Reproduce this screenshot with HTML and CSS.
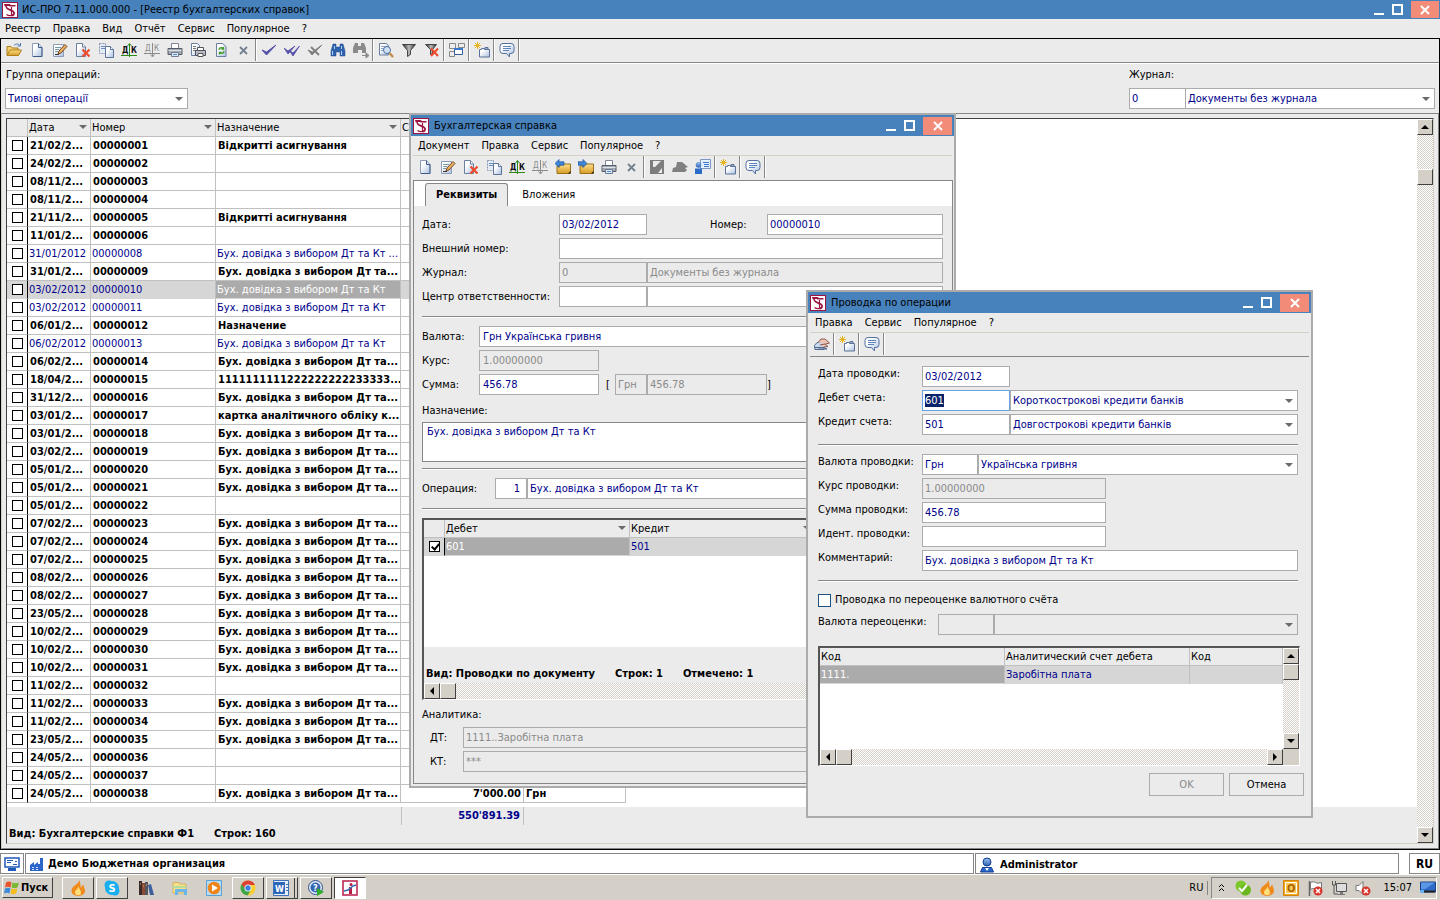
FILE: index.html
```html
<!DOCTYPE html>
<html lang="ru">
<head>
    <meta charset="UTF-8">
    <meta name="viewport" content="width=device-width, initial-scale=1.0">
    <title>ИС-ПРО 7.11.000.000 - [Реестр бухгалтерских справок]</title>
    <link rel="stylesheet" href="styles.css">
</head>
<body>
    <!-- Icons -->
    <svg class="sprite" width="0" height="0" aria-hidden="true">
        <defs>
            <linearGradient id="g-paper" x1="0" y1="0" x2="1" y2="1"><stop offset="0.3" stop-color="#fff"/><stop offset="1" stop-color="#a9bfe0"/></linearGradient>
            <linearGradient id="g-gold" x1="0" y1="0" x2="0" y2="1"><stop offset="0" stop-color="#fbe08a"/><stop offset="1" stop-color="#d79b24"/></linearGradient>
            <linearGradient id="g-blue" x1="0" y1="0" x2="0" y2="1"><stop offset="0" stop-color="#9cc3f0"/><stop offset="1" stop-color="#2b62b8"/></linearGradient>
            <linearGradient id="g-gray" x1="0" y1="0" x2="1" y2="0"><stop offset="0" stop-color="#222"/><stop offset="0.5" stop-color="#bbb"/><stop offset="1" stop-color="#222"/></linearGradient>
        </defs>
        <symbol id="i-logo" viewBox="0 0 16 16"><rect x="0.5" y="0.5" width="15" height="15" fill="#fff" stroke="#9b1540"/><path d="M2 2h5.500l1.500 1h4.500v1.500H8L6.500 4H5v1.500L2.500 4z" fill="#9b1540"/><path d="M4.500 5C4 8 11 7.500 12 10.500c.500 2-1 3-2.500 3" fill="none" stroke="#9b1540" stroke-width="1.800"/><path d="M9.500 5v9M4.500 12.500q2 1.500 5 1" fill="none" stroke="#9b1540" stroke-width="1.200"/></symbol>
        <symbol id="i-open" viewBox="0 0 16 16"><path d="M1 13V4.500h4l1.500 1.500H12v2" fill="#f2cf6b" stroke="#a87b1e"/><path d="M1 13.500L4 8h11.500l-3 5.500z" fill="url(#g-gold)" stroke="#b1801d"/><path d="M8 3.500c2-2 4-2 6 0M14.500 1v3h-3" fill="none" stroke="#4b78b0"/></symbol>
        <symbol id="i-new" viewBox="0 0 16 16"><path d="M3.500 1.500h6l3.500 4v9H3.500z" fill="url(#g-paper)" stroke="#8c9cb8"/><path d="M9.500 1.500v4H13M13 5.500v9H4" fill="none" stroke="#3f5a86"/></symbol>
        <symbol id="i-edit" viewBox="0 0 16 16"><path d="M1.500 2.500h10v12h-10z" fill="url(#g-paper)" stroke="#8c9cb8"/><path d="M3 5.500h6M3 7.500h4M3 9.500h3" stroke="#7a98a0"/><path d="M6 12l1-3 6-6.500 2 2-6 6.500z" fill="#e8b060" stroke="#7a4a28"/><path d="M3 12.500h4" stroke="#333"/></symbol>
        <symbol id="i-del" viewBox="0 0 16 16"><path d="M1.500 1.500h6l3 3.500v9.500h-9z" fill="url(#g-paper)" stroke="#6d7fa0"/><path d="M7.500 1.500v3.500h3" fill="#fff" stroke="#6d7fa0"/><path d="M7.500 7.500l7 7M14.500 7.500l-7 7" stroke="#f04a2a" stroke-width="2.200"/></symbol>
        <symbol id="i-copy" viewBox="0 0 16 16"><path d="M1.500 1.500h6v10h-6z" fill="#e6ecf5" stroke="#8b98b4" stroke-dasharray="2 1"/><path d="M3 4.500h4M3 6.500h4" stroke="#6d8fbd"/><path d="M7.500 4.500h5l3 3v8h-8z" fill="url(#g-paper)" stroke="#5d7298"/><path d="M12.500 4.500v3h3" fill="#fff" stroke="#5d7298"/></symbol>
        <symbol id="i-dk" viewBox="0 0 16 16"><text x="1" y="11" font-size="8" font-weight="bold" fill="#111">Д</text><text x="10" y="11" font-size="8" font-weight="bold" fill="#111">К</text><path d="M0 13.500h16" stroke="#2b8a16"/><path d="M8.500 15V2M6.500 4l2-2.500 2 2.500" fill="none" stroke="#2b8a16"/></symbol>
        <symbol id="i-dk-off" viewBox="0 0 16 16"><text x="1" y="9" font-size="8" fill="#8a8a8a">Д</text><text x="10" y="9" font-size="8" fill="#8a8a8a">К</text><path d="M0 11.500h16M8.500 1v13M6.500 12.500l2 2.500 2-2.500" fill="none" stroke="#8a8a8a"/></symbol>
        <symbol id="i-print" viewBox="0 0 16 16"><path d="M4.500 1.500h7v5h-7z" fill="#fff" stroke="#7f8796"/><path d="M1 6.500h14v6H1z" fill="#a5a9b2" stroke="#555c6b"/><path d="M1.500 8.500h13" stroke="#dfe2e8"/><path d="M4.500 10.500h7v4h-7z" fill="#dceaf8" stroke="#6f7a8f"/><path d="M6 12.500h4" stroke="#4a90d0"/></symbol>
        <symbol id="i-print2" viewBox="0 0 16 16"><path d="M1.500 1.500h6l2 2v10h-8z" fill="url(#g-paper)" stroke="#6d7fa0"/><path d="M3 4.500h3M3 6.500h3M3 8.500h3" stroke="#777"/><path d="M7.500 5.500h6v3h-6z" fill="#fff" stroke="#555"/><path d="M5.500 8.500h10v5h-10z" fill="#b9bcc4" stroke="#4d5260"/><path d="M8 11.500h5v3H8z" fill="#fff" stroke="#555"/></symbol>
        <symbol id="i-refresh" viewBox="0 0 16 16"><path d="M3.500 1.500h6l3.500 3v10H3.500z" fill="url(#g-paper)" stroke="#6d7fa0"/><path d="M6 8c0-2 2-3 4-1.500M10.500 5v2h-2M11 9c0 2-2 3-4 1.500M6.500 12.500v-2h2" fill="none" stroke="#3f9a22" stroke-width="1.300"/></symbol>
        <symbol id="i-x" viewBox="0 0 16 16"><path d="M4 5l7 7M11 5l-7 7" stroke="#74808f" stroke-width="1.800"/></symbol>
        <symbol id="i-check" viewBox="0 0 16 16"><path d="M1 8l4.500 5L15 3l-9.500 7z" fill="#5450a8" stroke="#5450a8"/></symbol>
        <symbol id="i-checks" viewBox="0 0 16 16"><path d="M0 6l4 6 7-8-7 5zM5 8l4 6 6.500-10L9 11z" fill="#5450a8" stroke="#5450a8" stroke-width="0.800"/></symbol>
        <symbol id="i-uncheck" viewBox="0 0 16 16"><path d="M1 8l4 5L15 3l-9.500 7z" fill="#808080" stroke="#808080"/><path d="M4 5l8 8" stroke="#808080" stroke-width="2"/></symbol>
        <symbol id="i-find" viewBox="0 0 16 16"><path d="M3 2h3v3h4V2h3l2 7v5h-5v-4H6v4H1V9z" fill="#2f62ad" stroke="#1d4484" stroke-width="0.500"/><path d="M2.500 9v4M4.500 4v3M11.500 4v3M11.500 9v4" stroke="#a9cdf3"/></symbol>
        <symbol id="i-findnext" viewBox="0 0 16 16"><path d="M2 1h3v3h3V1h3l2 5v5H9V8H5v3H0V6z" fill="#8a8a8a"/><path d="M9 13.500h5M13 11l3 2.500-3 2.500z" fill="#8a8a8a" stroke="#8a8a8a"/></symbol>
        <symbol id="i-preview" viewBox="0 0 16 16"><path d="M1.500 1.500h7l2 2.500v9h-9z" fill="url(#g-paper)" stroke="#6d7fa0"/><path d="M3 4.500h5M3 6.500h3M3 8.500h2" stroke="#8fa4c4"/><circle cx="9" cy="8" r="3.500" fill="#cfe2f7" stroke="#4d6fa0"/><path d="M11.500 11l3.500 4" stroke="#c08838" stroke-width="2"/></symbol>
        <symbol id="i-filter" viewBox="0 0 16 16"><path d="M1.500 2.500h13L9.500 8.500v4l-3 2v-6z" fill="url(#g-gray)" stroke="#444"/></symbol>
        <symbol id="i-nofilter" viewBox="0 0 16 16"><path d="M1.500 2.500h11L8.500 7.500v4l-2 1v-5z" fill="url(#g-gray)" stroke="#444"/><path d="M7 6.500l7 7.500M14 6.500L7 14" stroke="#f04a2a" stroke-width="2"/></symbol>
        <symbol id="i-windows" viewBox="0 0 16 16"><path d="M.5 1.500h6v5h-6zM9.500 1.500h6v4h-6zM.5 9.500h5v5h-5z" fill="#eee" stroke="#888"/><path d="M5.500 6.500h8v6h-8z" fill="#fff" stroke="#345f9f"/><path d="M5 7h9" stroke="#3b78d0" stroke-width="2"/></symbol>
        <symbol id="i-pin" viewBox="0 0 16 16"><path d="M3.500 0v7M0 3.500h7M1 1l5 5M6 1L1 6" stroke="#e3b41c"/><path d="M5.500 7.500h2v-1h3v1h5v7.500h-10z" fill="url(#g-paper)" stroke="#5d7298"/><path d="M11 5.500h3v2h-3z" fill="#a9b4c8" stroke="#5d7298"/></symbol>
        <symbol id="i-chat" viewBox="0 0 16 16"><path d="M4 1.500h8q3 0 3 3v4q0 3-3 3h-1.500v3.500l-3-3.500H4q-3 0-3-3v-4q0-3 3-3z" fill="url(#g-paper)" stroke="#53719f"/><path d="M4 4.500h8M4 6.500h8M4 8.500h6" stroke="#5c85bd"/></symbol>
        <symbol id="i-prev" viewBox="0 0 16 16"><path d="M2 7h3l1-2h9.500v9.500H2z" fill="url(#g-gold)" stroke="#9c7017"/><path d="M0 4.500l4-4v2.300h5v3.400H4v2.300z" fill="#3f86d8" stroke="#1c539b" stroke-width="0.700"/><path d="M13 14.500l2.500-2.500v2.500z" fill="#222"/></symbol>
        <symbol id="i-next" viewBox="0 0 16 16"><path d="M2 7h3l1-2h9.500v9.500H2z" fill="url(#g-gold)" stroke="#9c7017"/><path d="M9 4.500l-4-4v2.300H0v3.400h5v2.300z" fill="#3f86d8" stroke="#1c539b" stroke-width="0.700"/><path d="M13 14.500l2.500-2.500v2.500z" fill="#222"/></symbol>
        <symbol id="i-save" viewBox="0 0 16 16"><path d="M1 1h14v14H1z" fill="#7d7d7d"/><path d="M4 2h8L6 8H4zM9 14l4-5v5z" fill="#ebebeb"/></symbol>
        <symbol id="i-post" viewBox="0 0 16 16"><path d="M5 3h5l6 5-3 1 2 2-2 2H0l1-4 3-1z" fill="#808080"/></symbol>
        <symbol id="i-user" viewBox="0 0 16 16"><path d="M5.500 .5h10v9h-10z" fill="#e3efff" stroke="#7b97c4"/><path d="M8 3.500h6M9 5.500h5M9 7.500h5" stroke="#3f78c4"/><circle cx="3.500" cy="6" r="2.500" fill="url(#g-blue)" stroke="#2b62b8" stroke-width="0.500"/><path d="M0 15V9.500h7V15z" fill="#2b6cc8"/></symbol>
        <symbol id="i-books" viewBox="0 0 16 16"><path d="M.5 9.500L3 6.500h9l-2 3v4H1z" fill="#c8d8ee" stroke="#51668b"/><path d="M4 6.500l3-3.500h4l4.500 4-4 1M6 9l5-1 3 2.500-4 .5" fill="#f0c4b4" stroke="#8a5a50"/><path d="M1 11.500h9l3 1.500H4" fill="none" stroke="#51668b"/></symbol>
        <symbol id="i-pc" viewBox="0 0 16 16"><path d="M1 2h14v9H1z" fill="#fff" stroke="#2158b8" stroke-width="1.500"/><path d="M3 4.500h6M3 6.500h4M9 8.500h4M11 5.500h2" stroke="#2158b8"/><path d="M4 12h8v3H4z" fill="#2158b8"/></symbol>
        <symbol id="i-factory" viewBox="0 0 16 16"><path d="M1 15V9l4-3v3l4-3v2h2V2h3v13z" fill="#2b66c8"/><path d="M3 11.500h2M7 11.500h2M3 13.500h2M7 13.500h2" stroke="#cfe0fa"/></symbol>
        <symbol id="i-person" viewBox="0 0 16 16"><circle cx="8" cy="5" r="4" fill="url(#g-blue)" stroke="#123f94"/><path d="M1.500 15l2-4.500h9l2 4.500z" fill="#2b66c8" stroke="#123f94"/><path d="M6 11l2 3 2-3" fill="#fff"/></symbol>
        <symbol id="i-flag" viewBox="0 0 16 16"><path d="M2 2.500q3-2 5.500 0l-1 5q-3-1.500-5.500 0z" fill="#e8552a"/><path d="M8.500 2.500q3 1.500 6.500 0l-1.500 5q-3 1.500-6 0z" fill="#7cb82f"/><path d="M1 8.500q3-1.500 5.500 0l-1 5q-2.500-1.500-5.500 0z" fill="#3a8bd8"/><path d="M7.500 8.500q3 1.500 6 0l-1.500 5q-3 1.500-5.500 0z" fill="#f5bc1c"/></symbol>
        <symbol id="i-fire" viewBox="0 0 16 16"><path d="M9 0c1 4-8 6-7.500 11 .5 6.500 13 6.500 13.500 0 0-3-2-4-1-6-2 0-3 2-3 3-1-2 0-5-2-8z" fill="#f08a1c"/><path d="M8.500 6c0 3-4 4-3.500 7s6 3 6 0-2-4-2.500-7z" fill="#fde07a"/></symbol>
        <symbol id="i-skype" viewBox="0 0 16 16"><circle cx="5" cy="5" r="4.500" fill="#19aef0"/><circle cx="11" cy="11" r="4.500" fill="#19aef0"/><circle cx="8" cy="8" r="7" fill="#19aef0"/><text x="4.500" y="12" font-size="11" font-weight="bold" fill="#fff">S</text></symbol>
        <symbol id="i-lib" viewBox="0 0 16 16"><path d="M1 1h3v14H1z" fill="#3a2a28"/><path d="M4 3h3v12H4z" fill="#8c4a34"/><path d="M7 2h3v13H7z" fill="#57555c"/><path d="M10 5l3-1 3 11h-4z" fill="#3c5f9c"/><path d="M2 4h1M5 6h1M8 5h1" stroke="#d8b070"/></symbol>
        <symbol id="i-folder" viewBox="0 0 16 16"><path d="M1 2.500h6l1 1.500h6v9H1z" fill="#f7e08c" stroke="#cba63c" stroke-width="0.700"/><path d="M1 6h13v2H1z" fill="#b8dc9a"/><path d="M3 15V9h12v6h-3v-3H6v3z" fill="#6cb6ea"/></symbol>
        <symbol id="i-play" viewBox="0 0 16 16"><path d="M.5 .5h15v15H.5z" fill="#b8dcf4" stroke="#5aa0d4"/><circle cx="8" cy="8" r="6.300" fill="#f08418"/><path d="M6 4.500l6 3.500-6 3.500z" fill="#fff"/></symbol>
        <symbol id="i-chrome" viewBox="0 0 16 16"><circle cx="8" cy="8" r="7.500" fill="#f7cf2e"/><path d="M1.500 4.300A7.500 7.500 0 0 1 15 5H8L5 9.500z" fill="#de4034"/><path d="M1.500 4.300A7.500 7.500 0 0 0 7.500 15.500L11 10H6z" fill="#3da54a"/><circle cx="8" cy="8" r="3.500" fill="#fff"/><circle cx="8" cy="8" r="2.700" fill="#3f7fe0"/></symbol>
        <symbol id="i-word" viewBox="0 0 16 16"><path d="M.5 .5h15v15H.5z" fill="#e7f0fb" stroke="#3f6fb4"/><path d="M1 2h11v12H1z" fill="#2c66b8"/><path d="M13 4.500h2M13 7.500h2M13 10.500h2" stroke="#3f6fb4"/><text x="2" y="12" font-size="9" font-weight="bold" fill="#fff">W</text></symbol>
        <symbol id="i-help" viewBox="0 0 16 16"><circle cx="7.500" cy="7.500" r="7" fill="#e4eefa" stroke="#2f4f88"/><circle cx="7.500" cy="7.500" r="5" fill="#3366b0"/><text x="5" y="11" font-size="9" font-weight="bold" fill="#fff">?</text><path d="M9 8l7 4-7 4z" fill="#2fae28"/></symbol>
        <symbol id="i-ispro" viewBox="0 0 16 16"><path d="M1 1h14v14H1z" fill="#fff" stroke="#b81d48" stroke-width="1.500"/><path d="M7 7h3v7H7z" fill="#b81d48"/><circle cx="9" cy="4.500" r="1.500" fill="#b81d48"/><path d="M2 11l4-1 5-4 3-1" fill="none" stroke="#3a6eb8" stroke-width="1.500"/></symbol>
        <symbol id="i-ok" viewBox="0 0 16 16"><circle cx="6" cy="6" r="5.500" fill="#7cc82a"/><circle cx="10.500" cy="10" r="5.500" fill="#6ab81e"/><path d="M4 8l3 3 5-6" fill="none" stroke="#fff" stroke-width="2"/></symbol>
        <symbol id="i-outlook" viewBox="0 0 16 16"><path d="M.5 .5h15v15H.5z" fill="#f3a51c" stroke="#d0860e"/><path d="M2.500 2.500h11v11h-11z" fill="#f8c95a" stroke="#fff"/><text x="4" y="12" font-size="11" font-weight="bold" fill="#a86200">O</text></symbol>
        <symbol id="i-action" viewBox="0 0 16 16"><path d="M2.500 1v15" stroke="#666" stroke-width="1.500"/><path d="M3.500 2.500q3-1.500 5 0t6 0v7q-4 1-6-.5t-5 .5z" fill="#fff" stroke="#777"/><circle cx="11" cy="11" r="4.500" fill="#d8342a"/><path d="M9 9l4 4M13 9l-4 4" stroke="#fff" stroke-width="1.500"/></symbol>
        <symbol id="i-net" viewBox="0 0 16 16"><path d="M5.500 3.500h10v8h-10z" fill="#ddd" stroke="#555"/><path d="M9 12h3v2h2v1H7v-1h2z" fill="#777"/><path d="M1.500 1v4h3V1M3 5v9h4" fill="none" stroke="#555"/></symbol>
        <symbol id="i-mute" viewBox="0 0 16 16"><path d="M1 5.500h3l4-4v13l-4-4H1z" fill="#fff" stroke="#777"/><circle cx="11" cy="11" r="4.500" fill="#d8342a"/><path d="M9 9l4 4M13 9l-4 4" stroke="#fff" stroke-width="1.500"/></symbol>
        <symbol id="i-desk" viewBox="0 0 16 16"><path d="M.5 2h15v10H.5z" fill="#2f6cc8" stroke="#1b3f80"/><path d="M1 2.500h14L5 9H1z" fill="#5a97e4"/><path d="M1 11.500h14" stroke="#222" stroke-width="2"/><path d="M0 10h4v3H0z" fill="#69b0f0"/></symbol>
    </svg>

    <header class="titlebar">
        <svg class="icon"><use href="#i-logo"/></svg>
        <h1 class="caption">ИС-ПРО 7.11.000.000 - [Реестр бухгалтерских справок]</h1>
        <button class="win-btn min" aria-label="Свернуть"></button>
        <button class="win-btn max" aria-label="Развернуть"></button>
        <button class="win-btn close" aria-label="Закрыть"><svg viewBox="0 0 10 10"><path d="M1 1l8 8M9 1L1 9"/></svg></button>
    </header>
    <nav class="menu">
        <button>Реестр</button><button>Правка</button><button>Вид</button><button>Отчёт</button><button>Сервис</button><button>Популярное</button><button>?</button>
    </nav>

    <main class="workspace">
        <div class="toolbar" data-icons="open new edit del copy dk dk-off print print2 refresh x | check checks uncheck find findnext | preview filter nofilter | windows | pin | chat |"></div>

        <div class="filters">
            <div class="filter">
                <label for="group">Группа операций:</label>
                <span class="combo w183"><select id="group"><option>Типові операції</option></select></span>
            </div>
            <div class="filter filter-right">
                <label for="journal">Журнал:</label>
                <div class="pair">
                    <input class="field w57" id="journal" value="0">
                    <span class="combo grow"><select aria-label="Название журнала"><option>Документы без журнала</option></select></span>
                </div>
            </div>
        </div>

        <div class="registry">
            <div class="sheet">
                <div class="sheet-main">
                    <table class="grid reg-table">
                        <colgroup><col class="c-check"><col class="c-date"><col class="c-num"><col class="c-name"><col class="c-sum"><col class="c-cur"></colgroup>
                        <thead>
                            <tr><th></th><th class="sort">Дата</th><th class="sort">Номер</th><th class="sort">Назначение</th><th>Сумма</th><th>Валюта</th></tr>
                        </thead>
                        <tbody id="rows"></tbody>
                    </table>
                    <div class="sheet-foot">
                        <div class="total">550'891.39</div>
                        <div class="summary"><span>Вид: Бухгалтерские справки Ф1</span><span>Строк: 160</span></div>
                    </div>
                </div>
                <div class="scroll-v"><button class="sb up" aria-label="Вверх"></button><span class="thumb far"></span><button class="sb down" aria-label="Вниз"></button></div>
            </div>
        </div>
    </main>

    <section class="window win-doc" aria-label="Бухгалтерская справка">
        <div class="titlebar">
            <svg class="icon"><use href="#i-logo"/></svg>
            <h2 class="caption">Бухгалтерская справка</h2>
            <button class="win-btn min" aria-label="Свернуть"></button>
            <button class="win-btn max" aria-label="Развернуть"></button>
            <button class="win-btn close" aria-label="Закрыть"><svg viewBox="0 0 10 10"><path d="M1 1l8 8M9 1L1 9"/></svg></button>
        </div>
        <nav class="menu">
            <button>Документ</button><button>Правка</button><button>Сервис</button><button>Популярное</button><button>?</button>
        </nav>
        <div class="toolbar" data-icons="new edit del copy dk dk-off prev next print x | save post user | pin | chat |"></div>
        <div class="frame">
            <div class="tabs">
                <button class="tab active">Реквизиты</button>
                <button class="tab">Вложения</button>
            </div>
            <form class="form doc-form">
                <div class="row">
                    <label class="l-wide" for="d-date">Дата:</label><input class="field w88" id="d-date" value="03/02/2012">
                    <label class="l-num" for="d-num">Номер:</label><input class="field grow" id="d-num" value="00000010">
                </div>
                <div class="row"><label class="l-wide" for="d-ext">Внешний номер:</label><input class="field grow" id="d-ext"></div>
                <div class="row"><label class="l-wide" for="d-jr">Журнал:</label><input class="field w88" id="d-jr" value="0" disabled><input class="field grow" value="Документы без журнала" aria-label="Название журнала" disabled></div>
                <div class="row"><label class="l-wide" for="d-resp">Центр ответственности:</label><input class="field w88" id="d-resp"><input class="field grow" aria-label="Название центра"></div>
                <hr>
                <div class="row"><label class="l-short" for="d-cur">Валюта:</label><input class="field pad grow" id="d-cur" value="Грн Українська гривня"></div>
                <div class="row"><label class="l-short" for="d-rate">Курс:</label><input class="field pad w120" id="d-rate" value="1.00000000" disabled></div>
                <div class="row">
                    <label class="l-short" for="d-sum">Сумма:</label><input class="field pad w120" id="d-sum" value="456.78">
                    <span class="bracket">[</span><input class="field w32" value="Грн" aria-label="Валюта суммы" disabled><input class="field w120" value="456.78" aria-label="Сумма в валюте" disabled><span>]</span>
                </div>
                <label class="l-block" for="d-text">Назначение:</label>
                <textarea id="d-text">Бух. довідка з вибором Дт та Кт</textarea>
                <hr>
                <div class="row"><label class="l-oper" for="d-op">Операция:</label><input class="field num w32" id="d-op" value="1"><input class="field grow" value="Бух. довідка з вибором Дт та Кт" aria-label="Название операции"></div>
                <hr>
                <div class="list doc-list">
                    <div class="list-body">
                        <table class="grid">
                            <colgroup><col class="c-check"><col class="c-acc"><col class="c-acc"><col></colgroup>
                            <thead><tr><th></th><th class="sort">Дебет</th><th class="sort">Кредит</th><th></th></tr></thead>
                            <tbody><tr class="sel"><td class="chk"><input type="checkbox" class="tick" aria-label="601" checked></td><td class="cur">601</td><td>501</td><td></td></tr></tbody>
                        </table>
                    </div>
                    <div class="list-foot"><span>Вид: Проводки по документу</span><span>Строк: 1</span><span>Отмечено: 1</span></div>
                    <div class="scroll-h"><button type="button" class="sb left" aria-label="Влево"></button><span class="thumb"></span><button type="button" class="sb right" aria-label="Вправо"></button></div>
                </div>
                <div class="l-an">Аналитика:</div>
                <div class="row"><label class="l-dt" for="d-dt">ДТ:</label><input class="field grow" id="d-dt" value="1111..Заробітна плата" disabled></div>
                <div class="row"><label class="l-dt" for="d-kt">КТ:</label><input class="field grow" id="d-kt" value="***" disabled></div>
            </form>
        </div>
    </section>

    <section class="window win-post" aria-label="Проводка по операции">
        <div class="titlebar">
            <svg class="icon"><use href="#i-logo"/></svg>
            <h2 class="caption">Проводка по операции</h2>
            <button class="win-btn min" aria-label="Свернуть"></button>
            <button class="win-btn max" aria-label="Развернуть"></button>
            <button class="win-btn close" aria-label="Закрыть"><svg viewBox="0 0 10 10"><path d="M1 1l8 8M9 1L1 9"/></svg></button>
        </div>
        <nav class="menu">
            <button>Правка</button><button>Сервис</button><button>Популярное</button><button>?</button>
        </nav>
        <div class="toolbar" data-icons="books | pin | chat |"></div>
        <form class="form post-form">
            <div class="row"><label for="p-date">Дата проводки:</label><input class="field w88" id="p-date" value="03/02/2012"></div>
            <div class="row"><label for="p-debit">Дебет счета:</label><input class="field w88" id="p-debit" value="601"><span class="combo grow"><select aria-label="Счет дебета"><option>Короткострокові кредити банків</option></select></span></div>
            <div class="row"><label for="p-credit">Кредит счета:</label><input class="field w88" id="p-credit" value="501"><span class="combo grow"><select aria-label="Счет кредита"><option>Довгострокові кредити банків</option></select></span></div>
            <hr>
            <div class="row"><label for="p-cur">Валюта проводки:</label><input class="field w56" id="p-cur" value="Грн"><span class="combo grow"><select aria-label="Название валюты"><option>Українська гривня</option></select></span></div>
            <div class="row"><label for="p-rate">Курс проводки:</label><input class="field w184" id="p-rate" value="1.00000000" disabled></div>
            <div class="row"><label for="p-sum">Сумма проводки:</label><input class="field w184" id="p-sum" value="456.78"></div>
            <div class="row"><label for="p-id">Идент. проводки:</label><input class="field w184" id="p-id"></div>
            <div class="row"><label for="p-com">Комментарий:</label><input class="field grow" id="p-com" value="Бух. довідка з вибором Дт та Кт"></div>
            <hr>
            <div class="check-row"><input type="checkbox" class="tick big" id="p-rev"><label for="p-rev">Проводка по переоценке валютного счёта</label></div>
            <div class="row"><label class="l-rev" for="p-revcur">Валюта переоценки:</label><input class="field w56" id="p-revcur" disabled><span class="combo grow"><select aria-label="Название валюты переоценки" disabled><option></option></select></span></div>
            <div class="list post-list">
                <div class="sheet">
                    <div class="list-body">
                        <table class="grid">
                            <colgroup><col class="c-acc"><col class="c-acc"><col></colgroup>
                            <thead><tr><th>Код</th><th>Аналитический счет дебета</th><th>Код</th></tr></thead>
                            <tbody><tr class="sel"><td class="cur">1111.</td><td>Заробітна плата</td><td></td></tr></tbody>
                        </table>
                    </div>
                    <div class="scroll-v"><button type="button" class="sb up" aria-label="Вверх"></button><span class="thumb"></span><button type="button" class="sb down" aria-label="Вниз"></button></div>
                </div>
                <div class="scroll-h corner"><button type="button" class="sb left" aria-label="Влево"></button><span class="thumb"></span><button type="button" class="sb right" aria-label="Вправо"></button></div>
            </div>
            <div class="actions"><button type="button" disabled>OK</button><button type="button">Отмена</button></div>
        </form>
    </section>

    <div class="statusbar">
        <div class="cell"><svg class="icon"><use href="#i-pc"/></svg></div>
        <div class="cell"><svg class="icon"><use href="#i-factory"/></svg>Демо Бюджетная организация</div>
        <div class="cell user"><svg class="icon"><use href="#i-person"/></svg>Administrator</div>
        <div class="cell lang">RU</div>
    </div>

    <footer class="taskbar">
        <button class="start"><svg class="icon"><use href="#i-flag"/></svg>Пуск</button>
        <button class="task" aria-label="Nero"><svg class="icon"><use href="#i-fire"/></svg></button>
        <button class="task" aria-label="Skype"><svg class="icon"><use href="#i-skype"/></svg></button>
        <button class="task flat" aria-label="Библиотека"><svg class="icon"><use href="#i-lib"/></svg></button>
        <button class="task flat" aria-label="Проводник"><svg class="icon"><use href="#i-folder"/></svg></button>
        <button class="task flat" aria-label="Проигрыватель"><svg class="icon"><use href="#i-play"/></svg></button>
        <button class="task" aria-label="Chrome"><svg class="icon"><use href="#i-chrome"/></svg></button>
        <button class="task stack" aria-label="Word"><svg class="icon"><use href="#i-word"/></svg></button>
        <button class="task" aria-label="Справка"><svg class="icon"><use href="#i-help"/></svg></button>
        <button class="task pressed" aria-label="ИС-ПРО"><svg class="icon"><use href="#i-ispro"/></svg></button>
        <span class="kbd">RU</span>
        <div class="tray">
            <svg class="chevrons" viewBox="0 0 7 9"><path d="M1 4l2.500-2.500L6 4M1 8l2.500-2.500L6 8"/></svg>
            <svg class="icon"><use href="#i-ok"/></svg>
            <svg class="icon"><use href="#i-fire"/></svg>
            <svg class="icon"><use href="#i-outlook"/></svg>
            <svg class="icon"><use href="#i-action"/></svg>
            <svg class="icon"><use href="#i-net"/></svg>
            <svg class="icon"><use href="#i-mute"/></svg>
            <time>15:07</time>
            <svg class="icon"><use href="#i-desk"/></svg>
        </div>
    </footer>

    <script src="script.js"></script>
</body>
</html>
```

FILE: styles.css
```css
* {
    box-sizing: border-box;
}
body {
    margin: 0;
    min-height: 100vh;
    display: flex;
    flex-direction: column;
    position: relative;
    background-color: #ebebeb;
    color: #000;
    font-family: "DejaVu Sans Condensed", "DejaVu Sans", sans-serif;
    font-size: 11px;
    line-height: 14px;
}
button, input, select, textarea {
    font: inherit;
    color: inherit;
    margin: 0;
    padding: 0;
    border: none;
    border-radius: 0;
    background: none;
    outline: none;
    appearance: none;
}
.sprite {
    position: absolute;
}
.icon {
    width: 16px;
    height: 16px;
    flex: none;
}
.grow {
    flex: 1;
    min-width: 0;
}

/* Title bars */
.titlebar {
    display: flex;
    align-items: center;
    height: 19px;
    padding-left: 2px;
    background-color: #4882bc;
}
.caption {
    flex: 1;
    margin: 0 0 0 4px;
    font-size: 11px;
    font-weight: normal;
    white-space: nowrap;
}
.win-btn.min {
    width: 10px;
    height: 2px;
    margin: 8px 8px 0 0;
    background-color: #fff;
}
.win-btn.max {
    width: 11px;
    height: 11px;
    margin-right: 8px;
    border: 2px solid #fff;
}
.win-btn.close {
    width: 28px;
    height: 17px;
    margin-right: 1px;
    background-color: #f28b78;
}
.close svg {
    display: block;
    width: 10px;
    height: 10px;
    margin: auto;
    fill: none;
    stroke: #fff;
    stroke-width: 2;
}

/* Menu and toolbar */
.menu {
    display: flex;
    gap: 12px;
    height: 19px;
    align-items: center;
    padding-left: 5px;
}
.toolbar {
    display: flex;
    align-items: flex-start;
    height: 25px;
    padding-left: 1px;
    border-bottom: 1px solid #868686;
}
.workspace .toolbar {
    height: 24px;
}
.tool {
    width: 23px;
    height: 22px;
    display: flex;
    align-items: center;
    justify-content: center;
}
.sep {
    width: 2px;
    height: 22px;
    background-color: #868686;
    border-right: 1px solid #fff;
}

/* Fields */
.field, .combo select {
    height: 21px;
    border: 1px solid #ababab;
    padding: 0 2px;
    background-color: #fff;
    color: #00008b;
}
.combo {
    display: flex;
    position: relative;
}
.combo select {
    flex: 1;
    width: 100%;
}
.combo::after {
    content: "";
    position: absolute;
    right: 5px;
    top: 9px;
    border: 4px solid transparent;
    border-top-color: #6a6a6a;
    border-bottom: none;
}
.field:disabled, .combo select:disabled {
    background-color: #ebebeb;
    color: #8a8a8a;
    opacity: 1;
}
.field.pad {
    padding-left: 3px;
}
.field.num {
    text-align: right;
    padding-right: 6px;
}
.field:focus {
    border-color: #66a3e0;
}
.field::selection {
    background-color: #0a246a;
    color: #fff;
}
.w32 { width: 32px; }
.w56 { width: 56px; }
.w57 { width: 57px; }
.w88 { width: 88px; }
.w120 { width: 120px; }
.w183 { width: 183px; }
.w184 { width: 184px; }

/* Main window */
.workspace {
    flex: 1;
    display: flex;
    flex-direction: column;
    border: 1px solid #000;
}
.filters {
    display: flex;
    justify-content: space-between;
    padding: 4px;
    border-top: 1px solid #fff;
}
.filter label {
    display: block;
    padding-left: 1px;
    margin-bottom: 6px;
}
.filter-right {
    width: 306px;
}
.filter-right label {
    padding-left: 0;
}
.pair {
    display: flex;
}
.pair .combo {
    margin-left: -1px;
}
.registry {
    flex: 1;
    display: flex;
    border: 1px solid #868686;
    border-left-color: #d4d0c8;
    padding: 4px;
}
.sheet {
    flex: 1;
    display: flex;
    min-height: 0;
}
.registry .sheet {
    border: 1px solid #404040;
    border-right-color: #d4d0c8;
    border-bottom-color: #d4d0c8;
}
.sheet-main {
    flex: 1;
    display: flex;
    flex-direction: column;
    justify-content: space-between;
    background-color: #fff;
}
.grid {
    width: 100%;
    table-layout: fixed;
    border-collapse: separate;
    border-spacing: 0;
}
.reg-table {
    width: 619px;
}
.c-check { width: 21px; }
.c-date { width: 63px; }
.c-num { width: 125px; }
.c-name { width: 185px; }
.c-sum { width: 123px; }
.c-cur { width: 102px; }
.c-acc { width: 185px; }
.grid th, .grid td {
    height: 18px;
    padding: 0 2px;
    border-right: 1px solid #c0c0c0;
    border-bottom: 1px solid #c0c0c0;
    text-align: left;
    white-space: nowrap;
    overflow: hidden;
}
.grid th {
    position: relative;
    padding-left: 1px;
    background-color: #ebebeb;
    font-weight: normal;
}
.sort::after {
    content: "";
    position: absolute;
    right: 3px;
    top: 6px;
    border: 4px solid transparent;
    border-top-color: #6a6a6a;
    border-bottom: none;
}
.grid td {
    font-weight: bold;
}
.grid td.chk {
    padding: 0 0 0 5px;
    border-right-color: #000;
}
.grid td.money {
    text-align: right;
}
.grid .plain td, .grid .sel td {
    padding-left: 1px;
    font-weight: normal;
    color: #00008b;
}
.grid .sel td {
    background-color: #d6d6d6;
    border-bottom-color: #d6d6d6;
}
.grid .plain td.chk, .grid .sel td.chk {
    padding-left: 5px;
}
.grid .sel td.cur {
    background-color: #ababab;
    color: #fff;
}
.tick {
    display: block;
    width: 11px;
    height: 11px;
    border: 1px solid #000;
    background-color: #fff;
    position: relative;
}
.tick:checked::after {
    content: "";
    position: absolute;
    left: 3px;
    top: 0;
    width: 3px;
    height: 6px;
    border: solid #000;
    border-width: 0 2px 2px 0;
    transform: rotate(40deg);
}
.tick.big {
    width: 13px;
    height: 13px;
    border-color: #1c5180;
}
.sheet-foot {
    height: 36px;
    background-color: #ebebeb;
    font-weight: bold;
}
.total {
    width: 123px;
    height: 18px;
    margin-left: 394px;
    padding: 2px 3px;
    border: solid #c0c0c0;
    border-width: 0 1px;
    text-align: right;
    color: #00008b;
}
.summary {
    display: flex;
    gap: 20px;
    padding: 2px;
}

/* Scrollbars */
.scroll-v, .scroll-h {
    display: flex;
    background: repeating-conic-gradient(#fff 0 25%, #d4d0c8 0 50%) 0 0 / 2px 2px;
}
.scroll-v {
    width: 16px;
    flex-direction: column;
}
.scroll-h {
    height: 16px;
}
.sb, .thumb {
    width: 16px;
    height: 16px;
    flex: none;
    background-color: #d4d0c8;
    border: 1px solid;
    border-color: #fff #404040 #404040 #fff;
}
.sb::after {
    content: "";
    display: block;
    width: 0;
    margin: auto;
    border: 4px solid transparent;
}
.up::after {
    border-top: none;
    border-bottom-color: #000;
}
.down::after {
    border-bottom: none;
    border-top-color: #000;
}
.left::after {
    border-left: none;
    border-right-color: #000;
}
.right::after {
    border-right: none;
    border-left-color: #000;
}
.thumb.far {
    margin-top: 34px;
}
.down {
    margin-top: auto;
}
.right {
    margin-left: auto;
}
.corner {
    border-right: 16px solid #d4d0c8;
}

/* Child windows */
.window {
    position: absolute;
    border: 2px solid #ababab;
    background-color: #ebebeb;
}
.window .titlebar {
    height: 21px;
}
.window .caption {
    margin-left: 5px;
}
.window .close {
    width: 29px;
    height: 18px;
    margin-right: 2px;
}
.window .menu {
    padding-left: 7px;
}
.win-doc {
    left: 409px;
    top: 113px;
    width: 547px;
}
.win-post {
    left: 806px;
    top: 290px;
    width: 507px;
}
.window .toolbar {
    margin: 0 2px;
    padding-left: 0;
    border-top: 1px solid #d4d0c8;
}
.win-doc .toolbar {
    border-bottom: none;
}
.frame {
    margin: 0 1px 2px 2px;
    border: 1px solid #868686;
}
.tabs {
    display: flex;
    height: 25px;
    padding: 2px 0 0 11px;
    background-color: #fff;
}
.tab {
    padding: 0 14px;
}
.tab.active {
    padding: 0 10px;
    font-weight: bold;
    background-color: #ebebeb;
    border: solid #868686;
    border-width: 1px 1px 0;
    border-radius: 3px 3px 0 0;
}
.row {
    display: flex;
    align-items: center;
    margin-bottom: 3px;
}
.form hr {
    height: 2px;
    margin: 9px 0 8px;
    border: none;
    border-top: 1px solid #868686;
    background-color: #fff;
}
.form textarea + hr {
    margin-top: 6px;
}
.doc-form {
    padding: 8px 9px 8px 8px;
}
.l-wide { width: 137px; }
.l-num { width: 120px; padding-left: 63px; }
.l-short { width: 57px; }
.l-oper { width: 73px; }
.l-dt { width: 41px; padding-left: 8px; }
.bracket {
    width: 16px;
    padding-left: 7px;
}
.l-block {
    display: block;
    margin: 9px 0 4px;
}
.doc-form textarea {
    display: block;
    width: 100%;
    height: 40px;
    padding: 2px 4px;
    border: 1px solid #868686;
    background-color: #fff;
    color: #00008b;
    resize: none;
}
.list {
    border: 2px solid #555;
    border-right: 1px solid #fff;
    border-bottom: 1px solid #fff;
}
.list-body {
    flex: 1;
    min-width: 0;
    background-color: #fff;
}
.doc-list .list-body {
    min-height: 127px;
}
.post-list .list-body {
    min-height: 101px;
}
.list-foot {
    display: flex;
    gap: 20px;
    padding: 20px 2px 2px;
    font-weight: bold;
}
.l-an {
    margin: 8px 0 5px;
}
.post-form {
    padding: 9px 13px 20px 10px;
}
.post-form .row > label {
    width: 104px;
    padding-top: 1px;
    align-self: flex-start;
}
.post-form .row > .l-rev {
    width: 120px;
}
.check-row {
    display: flex;
    align-items: center;
    gap: 4px;
    margin: 11px 0 7px;
}
.post-list {
    margin: 11px -2px 0 0;
}
.actions {
    display: flex;
    justify-content: flex-end;
    gap: 5px;
    margin: 7px -6px 0 0;
}
.actions button {
    width: 75px;
    height: 23px;
    border: 1px solid #ababab;
}
.actions button:disabled {
    color: #8a8a8a;
}

/* Status bar and taskbar */
.statusbar {
    display: grid;
    grid-template-columns: 24px 949fr 432fr 32px;
    gap: 1px;
    height: 24px;
    padding: 3px 0 1px;
    background-color: #fff;
    font-weight: bold;
}
.cell {
    display: flex;
    align-items: center;
    gap: 3px;
    padding-left: 3px;
    border: 1px solid #868686;
}
.cell.user {
    margin-right: 8px;
    padding-top: 3px;
    gap: 5px;
}
.cell.lang {
    margin-left: 1px;
    padding-left: 6px;
    font-size: 12px;
}
.taskbar {
    display: flex;
    align-items: center;
    gap: 2px;
    height: 26px;
    padding: 0 3px 0 2px;
    background-color: #d4d0c8;
    border-top: 1px solid #fff;
}
.start {
    display: flex;
    align-items: center;
    gap: 1px;
    width: 51px;
    height: 21px;
    margin-right: 7px;
    padding-left: 1px;
    font-weight: bold;
    border: 1px solid;
    border-color: #fff #404040 #404040 #fff;
}
.task {
    display: flex;
    align-items: center;
    justify-content: center;
    width: 32px;
    height: 22px;
    border: 1px solid;
    border-color: #fff #404040 #404040 #fff;
}
.task.flat {
    border-color: transparent;
}
.task.stack {
    padding-right: 3px;
    box-shadow: inset -2px 0 #d4d0c8, inset -3px 0 #404040;
}
.task.pressed {
    background-color: #fff;
    border-color: #404040 #fff #fff #404040;
}
.kbd {
    margin-left: auto;
    padding-right: 4px;
    border-right: 1px solid #868686;
}
.tray {
    display: flex;
    align-items: center;
    gap: 8px;
    height: 22px;
    margin-left: 1px;
    padding-left: 6px;
    border: 1px solid;
    border-color: #868686 #fff #fff #868686;
}
.tray time {
    margin-left: 4px;
}
.chevrons {
    width: 7px;
    height: 9px;
    margin-right: 2px;
    fill: none;
    stroke: #000;
}
```

FILE: script.js
```js
const named = 'Бух. довідка з вибором Дт та...';

// date, number, text, row kind
const rows = [
    ['21/02/2...', '00000001', 'Відкритті асигнування'],
    ['24/02/2...', '00000002', ''],
    ['08/11/2...', '00000003', ''],
    ['08/11/2...', '00000004', ''],
    ['21/11/2...', '00000005', 'Відкритті асигнування'],
    ['11/01/2...', '00000006', ''],
    ['31/01/2012', '00000008', 'Бух. довідка з вибором Дт та Кт ...', 'plain'],
    ['31/01/2...', '00000009', named],
    ['03/02/2012', '00000010', 'Бух. довідка з вибором Дт та Кт', 'sel'],
    ['03/02/2012', '00000011', 'Бух. довідка з вибором Дт та Кт', 'plain'],
    ['06/01/2...', '00000012', 'Назначение'],
    ['06/02/2012', '00000013', 'Бух. довідка з вибором Дт та Кт', 'plain'],
    ['06/02/2...', '00000014', named],
    ['18/04/2...', '00000015', '1111111111222222222233333...'],
    ['31/12/2...', '00000016', named],
    ['03/01/2...', '00000017', 'картка аналітичного обліку к...'],
    ['03/01/2...', '00000018', named],
    ['03/02/2...', '00000019', named],
    ['05/01/2...', '00000020', named],
    ['05/01/2...', '00000021', named],
    ['05/01/2...', '00000022', ''],
    ['07/02/2...', '00000023', named],
    ['07/02/2...', '00000024', named],
    ['07/02/2...', '00000025', named],
    ['08/02/2...', '00000026', named],
    ['08/02/2...', '00000027', named],
    ['23/05/2...', '00000028', named],
    ['10/02/2...', '00000029', named],
    ['10/02/2...', '00000030', named],
    ['10/02/2...', '00000031', named],
    ['11/02/2...', '00000032', ''],
    ['11/02/2...', '00000033', named],
    ['11/02/2...', '00000034', named],
    ['23/05/2...', '00000035', named],
    ['24/05/2...', '00000036', ''],
    ['24/05/2...', '00000037', ''],
    ['24/05/2...', '00000038', named, '', "7'000.00", 'Грн']
];

document.getElementById('rows').innerHTML = rows.map(([date, num, text, kind = '', sum = '', cur = '']) => `
    <tr class="${kind}">
        <td class="chk"><input type="checkbox" class="tick" aria-label="${num}"></td>
        <td>${date}</td><td>${num}</td><td class="${kind === 'sel' ? 'cur' : ''}">${text}</td>
        <td class="money">${sum}</td><td>${cur}</td>
    </tr>`).join('');

// Toolbars: icon names, "|" is a separator
document.querySelectorAll('.toolbar').forEach(bar => {
    bar.innerHTML = bar.dataset.icons.split(' ').map(name => name === '|'
        ? '<span class="sep"></span>'
        : `<button class="tool" aria-label="${name}"><svg class="icon"><use href="#i-${name}"/></svg></button>`).join('');
});

document.getElementById('p-debit').select();
```
